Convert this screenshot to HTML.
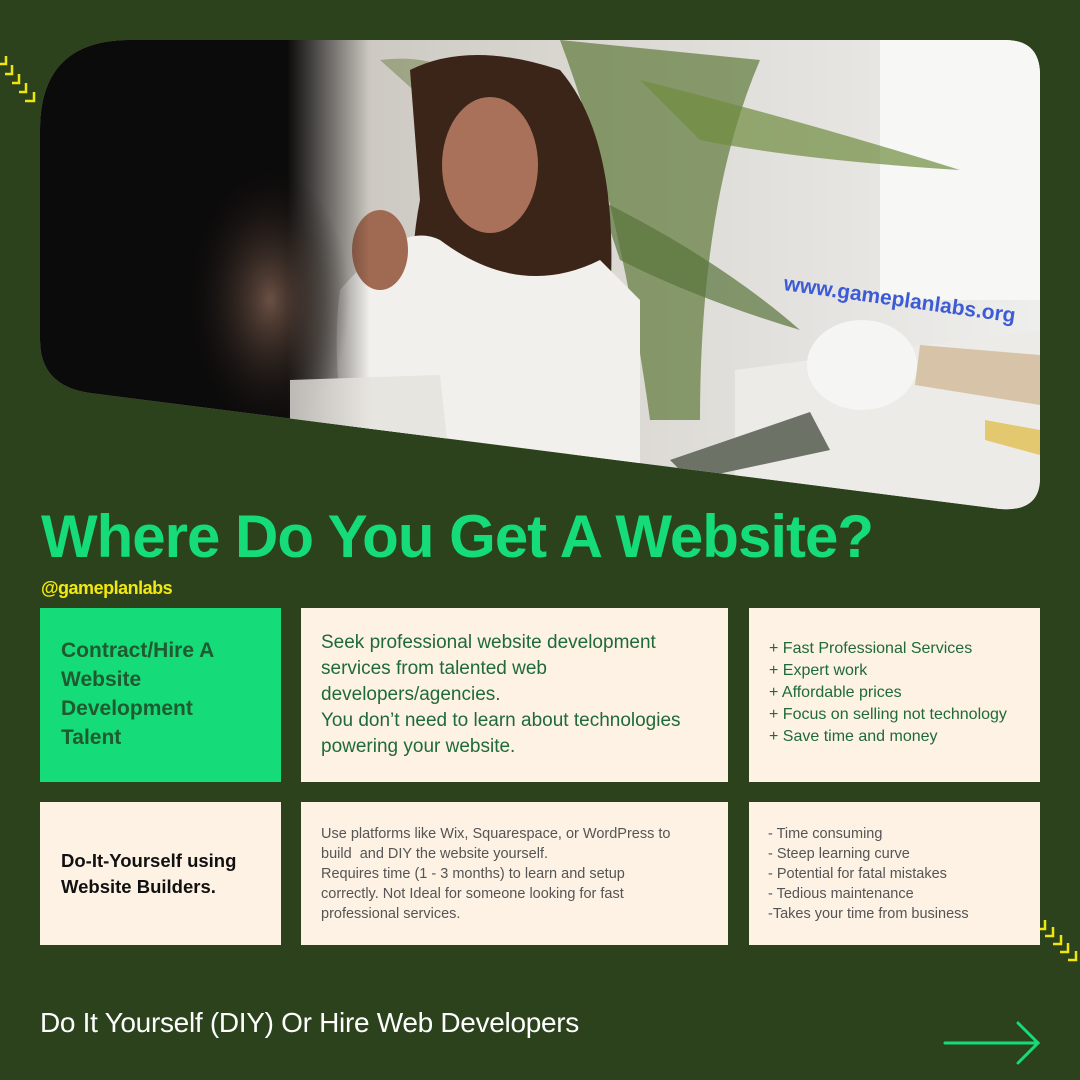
<!DOCTYPE html>
<html><head><meta charset="utf-8"><style>
*{margin:0;padding:0;box-sizing:border-box}
body{width:1080px;height:1080px;background:#2b421c;position:relative;overflow:hidden;font-family:"Liberation Sans",sans-serif}
.abs{position:absolute}
.card{position:absolute;background:#fdf2e4}
h1{position:absolute;left:41px;top:502px;font-size:60px;font-weight:bold;color:#15dc78;letter-spacing:-1px;white-space:nowrap}
.handle{left:41px;top:578px;font-size:18px;font-weight:bold;color:#f3e80f;letter-spacing:-0.5px}
.t1{color:#1f6a3a;font-size:19px;line-height:26px}
.t2{color:#1f6a3a;font-size:16px;line-height:22px}
.t3{color:#555;font-size:14.5px;line-height:20px}
</style></head><body>
<svg class="abs" style="left:0;top:0" width="1080" height="1080">
<defs>
<clipPath id="c"><path d="M40 130 Q40 40 130 40 L1005 40 Q1040 40 1040 75 L1040 478 Q1040 512 1000 509 L90 393 Q40 386 40 340 Z"/></clipPath>
<radialGradient id="face" cx="0.5" cy="0.5" r="0.5"><stop offset="0" stop-color="#6a5043"/><stop offset="1" stop-color="#1a1412" stop-opacity="0"/></radialGradient>
<linearGradient id="bg" x1="0" x2="1"><stop offset="0" stop-color="#b8b2aa"/><stop offset="0.5" stop-color="#d8d5cf"/><stop offset="1" stop-color="#eeeeec"/></linearGradient>
<linearGradient id="dk" x1="0" x2="1"><stop offset="0.75" stop-color="#0c0b0b"/><stop offset="1" stop-color="#0c0b0b" stop-opacity="0"/></linearGradient>
</defs>
<g clip-path="url(#c)">
<rect x="40" y="40" width="1000" height="480" fill="url(#bg)"/>
<rect x="880" y="40" width="160" height="260" fill="#f7f7f5"/>
<path d="M560 40 Q620 200 650 420 L700 420 Q700 200 760 60 Z" fill="#5f7a3a" opacity="0.7"/>
<path d="M640 80 Q800 120 960 170 Q800 160 700 140 Z" fill="#6f8c3f" opacity="0.7"/>
<path d="M600 200 Q720 260 800 330 Q700 300 620 260 Z" fill="#58743a" opacity="0.7"/>
<path d="M380 60 Q450 50 520 110 L540 200 L480 150 Z" fill="#6b7f45" opacity="0.5"/>
<path d="M735 370 L1040 330 L1040 520 L735 520 Z" fill="#ecebe7"/>
<ellipse cx="862" cy="365" rx="55" ry="45" fill="#f5f5f3"/>
<path d="M920 345 L1040 355 L1040 405 L915 385 Z" fill="#d7c3a8"/>
<path d="M985 420 L1040 430 L1040 455 L985 440 Z" fill="#e3c870"/>
<path d="M670 460 L810 412 L830 450 L690 480 Z" fill="#6d7267"/>
<path d="M410 70 Q470 40 560 70 Q620 140 610 300 Q620 420 560 460 L430 460 Q400 300 420 200 Z" fill="#3b2418"/>
<ellipse cx="490" cy="165" rx="48" ry="68" fill="#a9715a"/>
<path d="M340 290 Q400 220 440 240 Q520 300 600 260 L640 300 L640 470 L350 470 Q330 360 340 290 Z" fill="#f2f0ec"/>
<ellipse cx="380" cy="250" rx="28" ry="40" fill="#a06a52"/>
<path d="M290 380 L440 375 L450 470 L290 470 Z" fill="#ebe8e4"/>
<rect x="40" y="40" width="330" height="480" fill="url(#dk)"/>
<ellipse cx="270" cy="300" rx="80" ry="130" fill="url(#face)"/>
<path d="M290 380 L440 375 L450 470 L290 470 Z" fill="#e6e3de" opacity="0.8"/>
</g>
<text x="783" y="290" transform="rotate(8 783 290)" font-family="Liberation Sans" font-weight="bold" font-size="21" fill="#3d5bd6">www.gameplanlabs.org</text>
<g stroke="#f0e60e" stroke-width="2.5" fill="none">
<path d="M0 64 L6 64 L6 56"/><path d="M5 74 L12 74 L12 65"/><path d="M12 83 L19 83 L19 74"/><path d="M19 92 L26 92 L26 83"/><path d="M25 101 L34 101 L34 92"/>
<path d="M1029 922 L1037 922 L1037 913"/><path d="M1037 929 L1045 929 L1045 920"/><path d="M1045 936 L1053 936 L1053 927"/><path d="M1053 944 L1061 944 L1061 935"/><path d="M1060 952 L1068 952 L1068 943"/><path d="M1068 960 L1076 960 L1076 951"/>
</g>
<g stroke="#15dc78" stroke-width="3" fill="none" stroke-linecap="round">
<path d="M945 1043 L1038 1043"/><path d="M1018 1023 L1038 1043 L1018 1063"/>
</g>
</svg>
<h1>Where Do You Get A Website?</h1>
<div class="abs handle">@gameplanlabs</div>
<div class="card" style="left:40px;top:608px;width:241px;height:174px;background:#15dc78"></div>
<div class="abs" style="left:61px;top:636px;font-size:21px;font-weight:bold;line-height:29px;color:#1f5a30">Contract/Hire A<br>Website<br>Development<br>Talent</div>
<div class="card" style="left:301px;top:608px;width:427px;height:174px"></div>
<div class="abs t1" style="left:321px;top:630px">Seek professional website development<br>services from talented web<br>developers/agencies.<br>You don’t need to learn about technologies<br>powering your website.</div>
<div class="card" style="left:749px;top:608px;width:291px;height:174px"></div>
<div class="abs t2" style="left:769px;top:638px">+ Fast Professional Services<br>+ Expert work<br>+ Affordable prices<br>+ Focus on selling not technology<br>+ Save time and money</div>
<div class="card" style="left:40px;top:802px;width:241px;height:143px"></div>
<div class="abs" style="left:61px;top:848px;font-size:18.5px;font-weight:bold;line-height:26px;color:#111">Do-It-Yourself using<br>Website Builders.</div>
<div class="card" style="left:301px;top:802px;width:427px;height:143px"></div>
<div class="abs t3" style="left:321px;top:824px">Use platforms like Wix, Squarespace, or WordPress to<br>build&nbsp; and DIY the website yourself.<br>Requires time (1 - 3 months) to learn and setup<br>correctly. Not Ideal for someone looking for fast<br>professional services.</div>
<div class="card" style="left:749px;top:802px;width:291px;height:143px"></div>
<div class="abs t3" style="left:768px;top:824px">- Time consuming<br>- Steep learning curve<br>- Potential for fatal mistakes<br>- Tedious maintenance<br>-Takes your time from business</div>
<div class="abs" style="left:40px;top:1007px;font-size:28px;color:#fff;letter-spacing:-0.3px">Do It Yourself (DIY) Or Hire Web Developers</div>
</body></html>
